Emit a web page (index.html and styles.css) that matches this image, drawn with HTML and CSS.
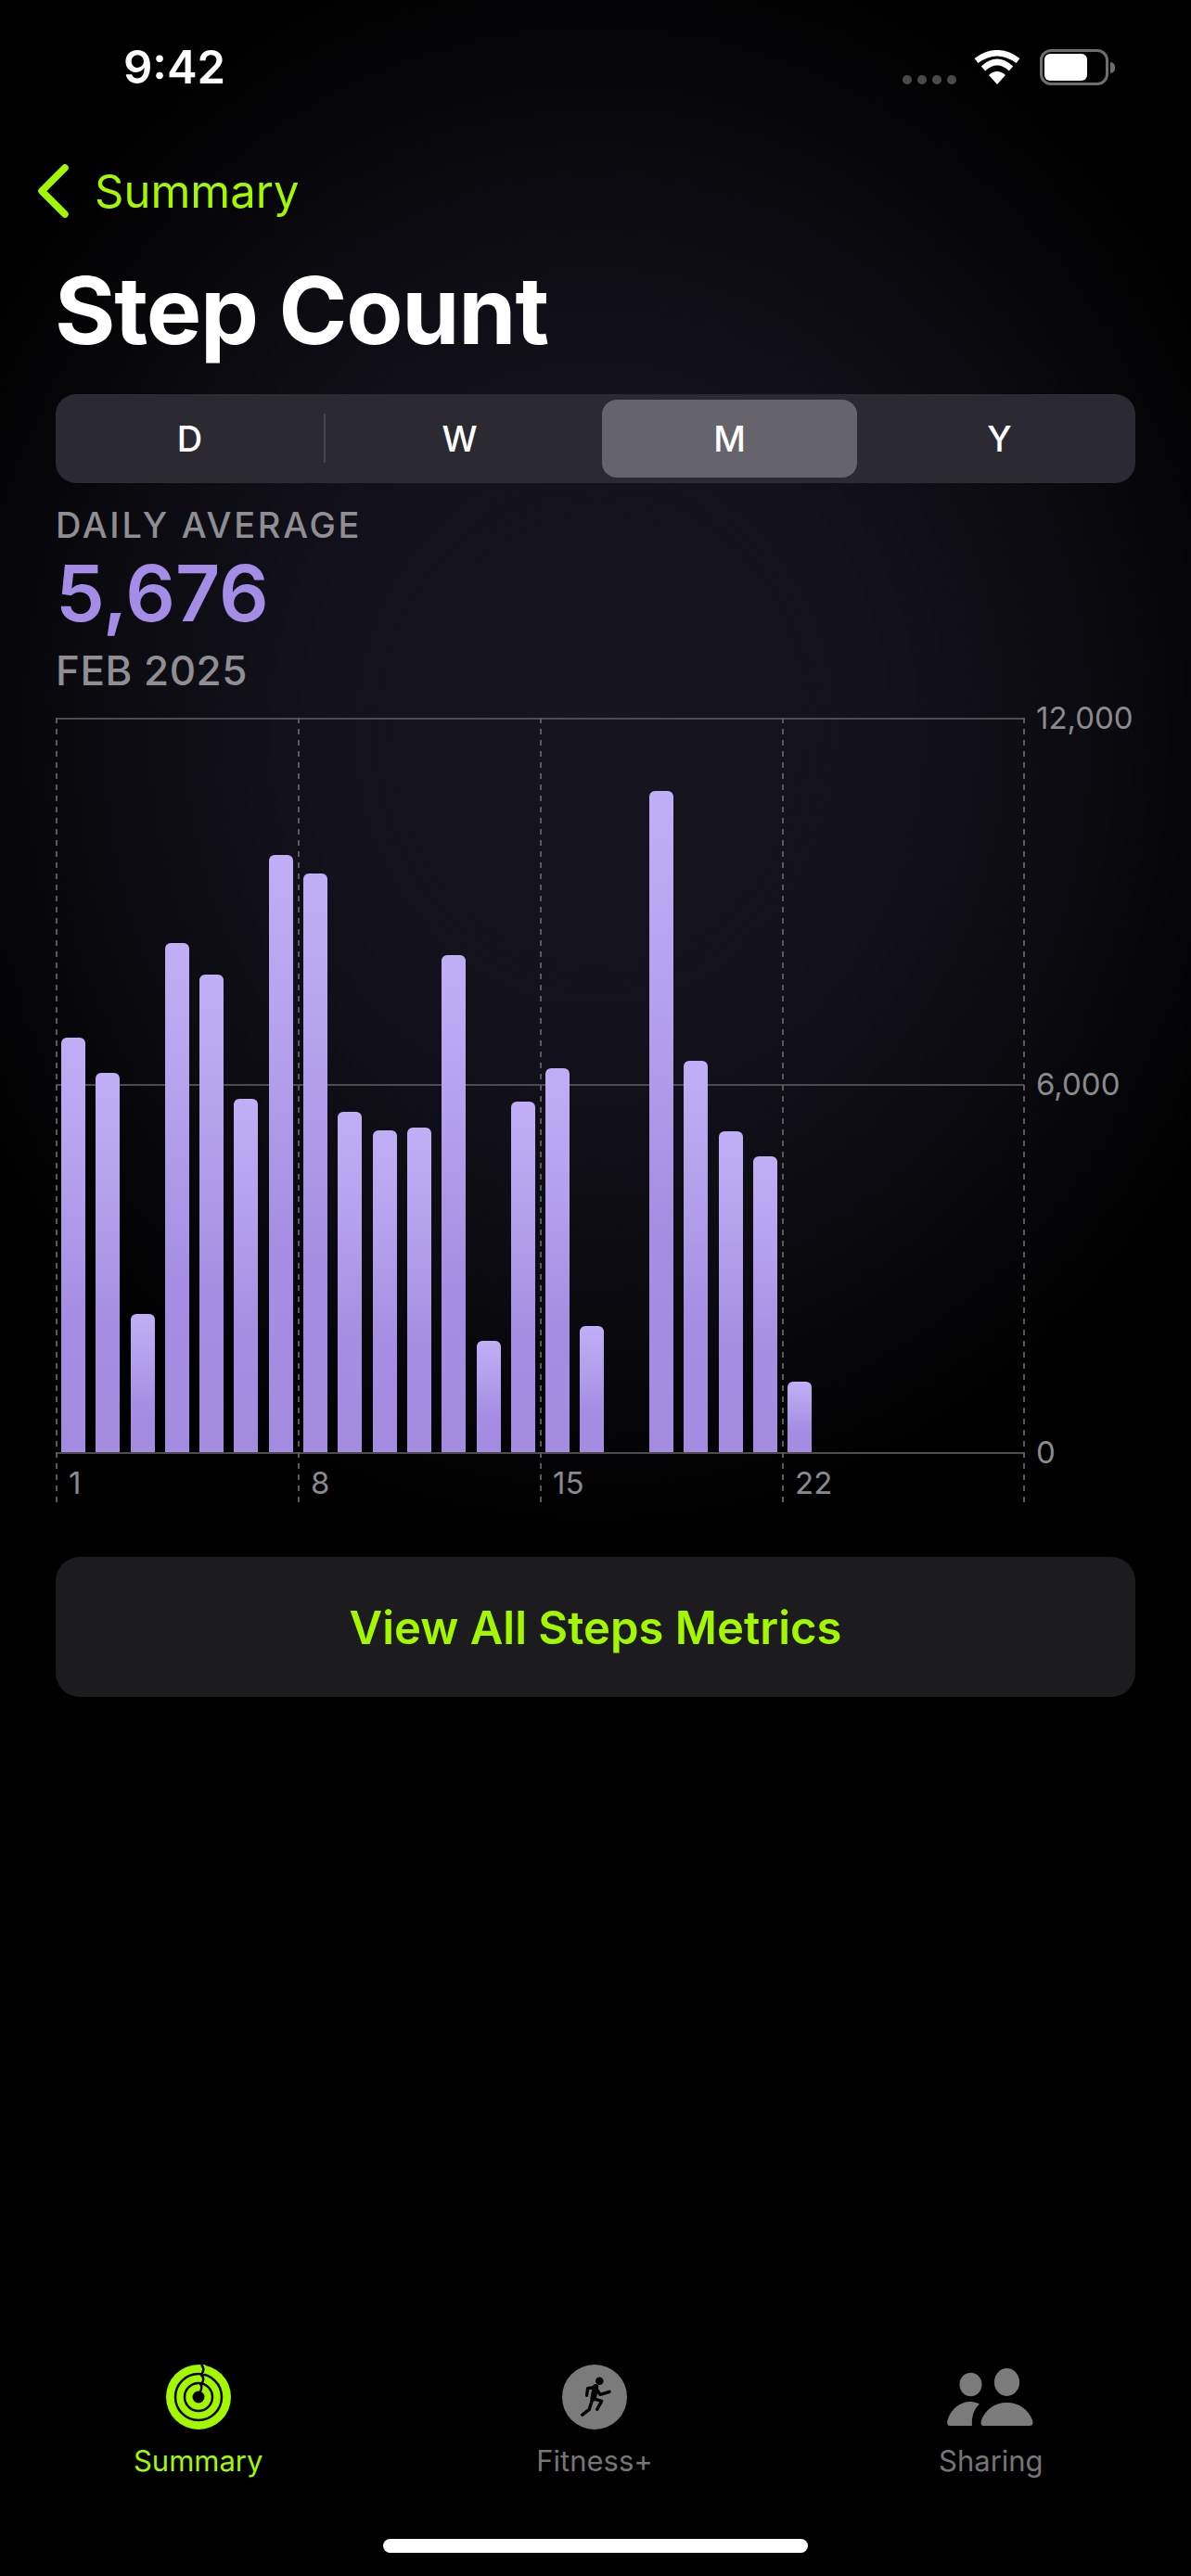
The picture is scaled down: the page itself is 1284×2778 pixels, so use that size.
FILE: index.html
```html
<!DOCTYPE html>
<html lang="en">
<head>
  <meta charset="UTF-8">
  <meta name="viewport" content="width=device-width, initial-scale=1.0">
  <title>Step Count</title>
  <link rel="stylesheet" href="styles.css">
</head>
<body>
  <div class="screen">
    <header class="status-bar">
      <span class="time">9:42</span>
      <div class="status-icons">
        <div class="signal"><i></i><i></i><i></i><i></i></div>
        <svg class="wifi" width="50" height="38" viewBox="0 0 50 38">
          <path d="M25 37 L16 27 Q25 19 34 27 Z" fill="#fff"/>
          <path d="M10 20 Q25 6 40 20" fill="none" stroke="#fff" stroke-width="6.5"/>
          <path d="M2.500 11.500 Q25 -5 47.500 11.500" fill="none" stroke="#fff" stroke-width="6.500"/>
        </svg>
        <div class="battery"><div class="battery-level"></div></div>
        <div class="battery-tip"></div>
      </div>
    </header>

    <nav class="back-link">
      <svg width="36" height="58" viewBox="0 0 36 58">
        <path d="M32 4 L7 29 L32 54" fill="none" stroke="#a3f800" stroke-width="7.5" stroke-linecap="round" stroke-linejoin="round"/>
      </svg>
      <span>Summary</span>
    </nav>

    <main class="content">
      <h1>Step Count</h1>

      <div class="segments">
        <div class="segment">D</div>
        <div class="segment">W</div>
        <div class="segment selected">M</div>
        <div class="segment">Y</div>
        <div class="segment-divider"></div>
      </div>

      <div class="stat-label">DAILY AVERAGE</div>
      <div class="stat-value">5,676</div>
      <div class="stat-date">FEB 2025</div>

      <div class="chart">
        <div class="plot">
          <div class="hline top"></div>
          <div class="hline mid"></div>
          <div class="vline"></div>
          <div class="vline"></div>
          <div class="vline"></div>
          <div class="vline"></div>
          <div class="vline"></div>
          <div class="bars">
            <div class="bar" style="height:447px"></div>
            <div class="bar" style="height:409px"></div>
            <div class="bar" style="height:149px"></div>
            <div class="bar" style="height:549px"></div>
            <div class="bar" style="height:515px"></div>
            <div class="bar" style="height:381px"></div>
            <div class="bar" style="height:644px"></div>
            <div class="bar" style="height:624px"></div>
            <div class="bar" style="height:367px"></div>
            <div class="bar" style="height:347px"></div>
            <div class="bar" style="height:350px"></div>
            <div class="bar" style="height:536px"></div>
            <div class="bar" style="height:120px"></div>
            <div class="bar" style="height:378px"></div>
            <div class="bar" style="height:414px"></div>
            <div class="bar" style="height:136px"></div>
            <div class="bar" style="height:0"></div>
            <div class="bar" style="height:713px"></div>
            <div class="bar" style="height:422px"></div>
            <div class="bar" style="height:346px"></div>
            <div class="bar" style="height:319px"></div>
            <div class="bar" style="height:76px"></div>
          </div>
        </div>
        <div class="y-labels">
          <span>12,000</span>
          <span>6,000</span>
          <span>0</span>
        </div>
        <div class="x-labels">
          <span>1</span>
          <span>8</span>
          <span>15</span>
          <span>22</span>
        </div>
      </div>

      <button class="metrics-btn">View All Steps Metrics</button>
    </main>

    <footer class="tab-bar">
      <div class="tab active">
        <svg width="70" height="70" viewBox="0 0 70 70">
          <circle cx="35" cy="35" r="35" fill="#a3f800"/>
          <g fill="none" stroke="#000" stroke-width="2.500">
            <circle cx="35" cy="35" r="25"/>
            <circle cx="35" cy="35" r="15"/>
            <path d="M38 0 C41 3 41 7 38 11 C41 14 41 18 37.500 21.500 C39 24 38.500 26 37 29"/>
          </g>
          <path d="M36.400 -1 L42 -1 L42 9 L39.500 10.800 Z" fill="#a3f800"/>
          <path d="M38 0 C41 3 41 7 38 11" fill="none" stroke="#000" stroke-width="2.500"/>
          <circle cx="35" cy="35" r="6.500" fill="#000"/>
        </svg>
        <span>Summary</span>
      </div>
      <div class="tab">
        <svg width="70" height="70" viewBox="0 0 70 70">
          <circle cx="35" cy="35" r="35" fill="#7b7b7b"/>
          <circle cx="40.300" cy="17.700" r="4.300" fill="#000"/>
          <path d="M36 24.300 L33.600 36.700" stroke="#000" stroke-width="6.500" stroke-linecap="round"/>
          <g fill="none" stroke="#000" stroke-width="3.400" stroke-linecap="round" stroke-linejoin="round">
            <path d="M26.600 33.300 L27.600 25.700 L36 24.300 L41 32.300 L51 29.300"/>
            <path d="M33.600 36.700 L42.600 39.300 L37.600 48.300"/>
            <path d="M32.500 38 L29.300 48.300 L21.600 54.300"/>
          </g>
        </svg>
        <span>Fitness+</span>
      </div>
      <div class="tab">
        <svg width="94" height="70" viewBox="0 0 94 70">
          <g fill="#7b7b7b">
            <ellipse cx="25.500" cy="21.500" rx="12" ry="12.700"/>
            <ellipse cx="64.500" cy="19" rx="13.600" ry="15"/>
            <path d="M3 66 C0.500 66 -0.500 63 0.500 60 C4 48 14 40 25 40 C29 40 32 41 35 42.500 C30 47 26 55 27 66 Z"/>
            <path d="M39 66 C36 66 36.500 62 37 60 C41 49 51 41 64.500 41 C78 41 88 49 92 60 C93 63 92.500 66 89 66 Z"/>
          </g>
        </svg>
        <span>Sharing</span>
      </div>
    </footer>

    <div class="home-bar"></div>
  </div>
</body>
</html>
```

FILE: styles.css
```css
* {
  box-sizing: border-box;
  margin: 0;
  padding: 0;
}

body {
  background: #000;
  font-family: 'Inter', 'Liberation Sans', sans-serif;
  color: #fff;
}

.screen {
  display: flex;
  flex-direction: column;
  width: 1284px;
  height: 2778px;
  overflow: hidden;
  background: radial-gradient(ellipse 760px 860px at 50% 790px, #16141f 0%, #13121c 40%, #08080c 80%, #000 100%);
}

/* status bar */
.status-bar {
  display: flex;
  justify-content: space-between;
  align-items: center;
  height: 72px;
  margin-top: 36px;
  padding: 0 82px 0 133px;
}

.time {
  font-size: 49px;
  font-weight: 600;
}

.status-icons {
  display: flex;
  align-items: flex-end;
}

.signal {
  display: flex;
  gap: 6px;
  margin: 0 19px 1px 0;
}

.signal i {
  width: 10px;
  height: 10px;
  border-radius: 50%;
  background: #4a4a4a;
}

.wifi {
  margin-right: 21px;
}

.battery {
  width: 74px;
  height: 39px;
  padding: 2px;
  border: 3px solid #6e6e6e;
  border-radius: 12px;
}

.battery-level {
  width: 46px;
  height: 100%;
  border-radius: 6px;
  background: #fff;
}

.battery-tip {
  width: 5px;
  height: 12px;
  margin: 0 0 13px 2px;
  border-radius: 0 6px 6px 0;
  background: #6e6e6e;
}

/* back link */
.back-link {
  display: flex;
  align-items: center;
  gap: 28px;
  height: 58px;
  margin-top: 69px;
  padding-left: 38px;
  color: #a3f800;
  font-size: 49px;
}

/* main */
.content {
  padding: 0 60px;
  flex: 1;
}

h1 {
  margin: 45px 0 0 -1px;
  font-size: 100px;
  font-weight: 700;
  line-height: 110px;
  letter-spacing: -1.2px;
}

.segments {
  position: relative;
  display: grid;
  grid-template-columns: repeat(4, 275px);
  gap: 16px;
  height: 96px;
  margin-top: 35px;
  padding: 6px 0 6px 7px;
  border-radius: 22px;
  background: #2b2a32;
}

.segment {
  display: flex;
  align-items: center;
  justify-content: center;
  border-radius: 16px;
  font-size: 38px;
  font-weight: 500;
}

.segment.selected {
  background: #65646c;
}

.segment-divider {
  position: absolute;
  left: 289px;
  top: 21px;
  width: 2px;
  height: 53px;
  background: #47464d;
}

.stat-label {
  margin-top: 22px;
  color: #8e8e93;
  font-size: 38px;
  font-weight: 500;
  line-height: 46px;
  letter-spacing: 2.7px;
}

.stat-value {
  margin-top: 5px;
  color: #a48de6;
  font-size: 84px;
  font-weight: 600;
  line-height: 92px;
}

.stat-date {
  margin-top: 11px;
  color: #8e8e93;
  font-size: 44px;
  font-weight: 500;
  line-height: 52px;
  letter-spacing: 0.5px;
}

/* chart */
.chart {
  display: grid;
  grid-template-columns: 1044px 120px;
  margin-top: 25px;
}

.plot {
  position: relative;
  height: 794px;
  border-bottom: 2px solid #4c4c4e;
}

.hline {
  position: absolute;
  left: 0;
  right: 0;
  height: 2px;
  background: #4c4b50;
}

.hline.top {
  top: 0;
}

.hline.mid {
  top: 395px;
}

.vline {
  position: absolute;
  top: 0;
  bottom: -54px;
  width: 2px;
  background: repeating-linear-gradient(to bottom, #5a5a5e 0, #5a5a5e 6px, transparent 6px, transparent 12px);
}

.vline:nth-child(3) { left: 0; }
.vline:nth-child(4) { left: 261px; }
.vline:nth-child(5) { left: 522px; }
.vline:nth-child(6) { left: 783px; }
.vline:nth-child(7) { left: 1043px; }

.bars {
  position: absolute;
  left: 6px;
  bottom: 0;
  display: flex;
  align-items: flex-end;
  gap: 11.3px;
}

.bar {
  width: 26px;
  border-radius: 6px 6px 0 0;
  background: linear-gradient(to bottom, #c0aef6 0, #b5a2ed 30%, #a48de2 68%, #a38ce0 100%);
}

.y-labels {
  position: relative;
  color: #8a8a8e;
  font-size: 33px;
}

.y-labels span {
  position: absolute;
  left: 13px;
  line-height: 40px;
}

.y-labels span:nth-child(1) { top: -20px; }
.y-labels span:nth-child(2) { top: 375px; }
.y-labels span:nth-child(3) { top: 772px; }

.x-labels {
  display: grid;
  grid-template-columns: repeat(4, 261px);
  height: 52px;
  padding-top: 11px;
  color: #8a8a8e;
  font-size: 33px;
  line-height: 40px;
}

.x-labels span {
  padding-left: 14px;
}

.metrics-btn {
  display: block;
  width: 100%;
  height: 151px;
  margin-top: 59px;
  padding-top: 2px;
  border: none;
  border-radius: 26px;
  background: #1c1c1e;
  color: #a3f800;
  font-family: inherit;
  font-size: 49px;
  font-weight: 600;
}

/* tab bar */
.tab-bar {
  display: grid;
  grid-template-columns: repeat(3, 1fr);
  margin-bottom: 104px;
  padding-right: 2px;
}

.tab {
  display: flex;
  flex-direction: column;
  align-items: center;
  gap: 14px;
  color: #757575;
  font-size: 31px;
  line-height: 40px;
}

.tab.active {
  color: #a3f800;
}

.home-bar {
  position: absolute;
  left: 413px;
  top: 2738px;
  width: 458px;
  height: 15px;
  border-radius: 8px;
  background: #fff;
}
```
